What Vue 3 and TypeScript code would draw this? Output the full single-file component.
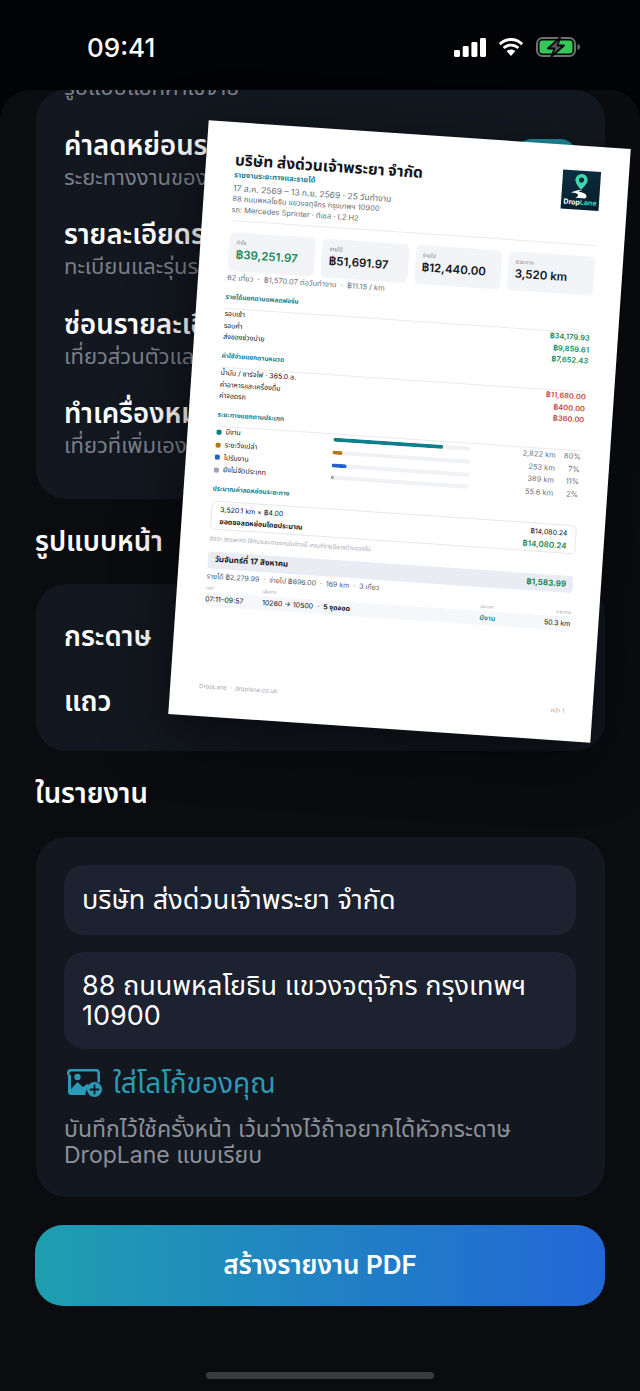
<template>
  <div class="screen">
    <header class="status-bar">
      <span class="clock">09:41</span>
      <div class="status-icons">
        <svg class="signal" viewBox="0 0 32 19" aria-hidden="true">
          <rect x="0" y="12" width="6" height="7" rx="1.4" />
          <rect x="8.7" y="8" width="6" height="11" rx="1.4" />
          <rect x="17.4" y="4" width="6" height="15" rx="1.4" />
          <rect x="26" y="0" width="6" height="19" rx="1.4" />
        </svg>
        <svg class="wifi" viewBox="0 0 28 20" aria-hidden="true">
          <path d="M14 4c4 0 7.500 1.500 10.300 4.200l1.800-2.100C22.800 2.900 18.600 1 14 1S5.200 2.900 1.900 6.100l1.800 2.100C6.500 5.500 10 4 14 4z" />
          <path d="M14 9.600c2.500 0 4.700.9 6.400 2.500l1.900-2.100C20.100 7.900 17.200 6.700 14 6.700s-6.100 1.200-8.300 3.300l1.900 2.100c1.700-1.600 3.900-2.500 6.400-2.500z" />
          <path d="M14 12.400c-1.700 0-3.200.6-4.400 1.700l4.400 5 4.400-5c-1.200-1.100-2.700-1.700-4.400-1.700z" />
        </svg>
        <svg class="battery" viewBox="0 0 45 20" aria-hidden="true">
          <rect x="1" y="1" width="38" height="18" rx="5.500" fill="none" stroke="#6d6f70" stroke-width="2" />
          <rect x="3.500" y="3.500" width="33" height="13" rx="3" fill="#35c759" />
          <path d="M41.500 7v6c1.600-.3 2.500-1.500 2.500-3s-.9-2.700-2.500-3z" fill="#6d6f70" />
          <path d="M24 .5L12 11.500h6.500L15.500 19.500 28 8.500h-6.500z" fill="#55585a" stroke="#05070a" stroke-width="1.800" stroke-linejoin="round" />
        </svg>
      </div>
    </header>

    <main class="sheet">
      <div class="scroll-area">
        <section class="card options-card">
          <div v-for="option in reportOptions" :key="option.detail" class="option-row">
            <div class="option-copy">
              <strong v-if="option.title">{{ option.title }}</strong>
              <span>{{ option.detail }}</span>
            </div>
            <i v-if="option.on" class="toggle" />
          </div>
        </section>

        <h2 class="section-title">รูปแบบหน้า</h2>
        <section class="card page-card">
          <div class="page-row">กระดาษ</div>
          <div class="page-row">แถว</div>
        </section>

        <h2 class="section-title">ในรายงาน</h2>
        <section class="card details-card">
          <div class="field">บริษัท ส่งด่วนเจ้าพระยา จำกัด</div>
          <div class="field">88 ถนนพหลโยธิน แขวงจตุจักร กรุงเทพฯ 10900</div>
          <button type="button" class="logo-button">
            <svg class="logo-icon" viewBox="0 0 36 28" aria-hidden="true">
              <path d="M4 0h25a4 4 0 0 1 4 4v9.600a9.500 9.500 0 0 0-2.600-.4V4.200A1.600 1.600 0 0 0 28.800 2.600H4.200A1.600 1.600 0 0 0 2.600 4.200v1.800H0V4a4 4 0 0 1 4-4z" />
              <path d="M1 6h3v14l6.500-7 5.500 5 4-3 3.400 2.200A9.500 9.500 0 0 0 18.500 26H4a3 3 0 0 1-3-3z" />
              <circle cx="10.500" cy="8" r="3.200" />
              <circle cx="27.500" cy="20.500" r="7.500" />
              <path d="M27.500 16.500v8M23.500 20.500h8" fill="none" stroke="#13171f" stroke-width="1.800" stroke-linecap="round" />
            </svg>
            <span>ใส่โลโก้ของคุณ</span>
          </button>
          <p class="field-hint">บันทึกไว้ใช้ครั้งหน้า เว้นว่างไว้ถ้าอยากได้หัวกระดาษ DropLane แบบเรียบ</p>
        </section>

        <button type="button" class="create-button">สร้างรายงาน PDF</button>
      </div>
      <div class="home-indicator" />
    </main>

    <article class="paper">
      <div class="paper-head">
        <div class="paper-company">
          <h1>บริษัท ส่งด่วนเจ้าพระยา จำกัด</h1>
          <h3>รายงานระยะทางและรายได้</h3>
          <p class="paper-dates">17 ส.ค. 2569 – 13 ก.ย. 2569 · 25 วันทำงาน</p>
          <p>88 ถนนพหลโยธิน แขวงจตุจักร กรุงเทพฯ 10900</p>
          <p>รถ: Mercedes Sprinter · ดีเซล · L2 H2</p>
        </div>
        <div class="paper-logo">
          <svg viewBox="0 0 38 26" aria-hidden="true">
            <path d="M19 .5a6.500 6.500 0 0 0-6.500 6.500c0 4.200 6.500 10 6.500 10s6.500-5.800 6.500-10A6.500 6.500 0 0 0 19 .5z" fill="#3fd8b0" />
            <circle cx="19" cy="7" r="2.700" fill="#0e2a3c" />
            <path d="M21 17c-5 .6-10 2.200-13 4 5-.5 8 .3 8.500 2 .3 1-1 2-2.500 3h10c2-1.500 2-3.500-.5-5-2-1-5-1.500-7-1.500 1.500-1.200 3-2 4.500-2.500z" fill="#fff" />
          </svg>
          <span>Drop<em>Lane</em></span>
        </div>
      </div>

      <div class="kpi-grid">
        <div v-for="kpi in kpis" :key="kpi.label" class="kpi">
          <small>{{ kpi.label }}</small>
          <b :class="{ 'kpi-profit': kpi.profit }">{{ kpi.value }}</b>
        </div>
      </div>
      <p class="paper-stats">62 เที่ยว &nbsp;·&nbsp; ฿1,570.07 ต่อวันทำงาน &nbsp;·&nbsp; ฿11.15 / km</p>

      <h4 class="paper-section">รายได้แยกตามแพลตฟอร์ม</h4>
      <div v-for="row in incomeRows" :key="row.label" class="money-row">
        <span>{{ row.label }}</span><b class="income">{{ row.value }}</b>
      </div>

      <h4 class="paper-section">ค่าใช้จ่ายแยกตามหมวด</h4>
      <div v-for="row in expenseRows" :key="row.label" class="money-row">
        <span>{{ row.label }}</span><b class="expense">{{ row.value }}</b>
      </div>

      <h4 class="paper-section">ระยะทางแยกตามประเภท</h4>
      <div v-for="row in distanceRows" :key="row.label" class="distance-row">
        <i class="dot" :style="{ background: row.color }" />
        <span class="distance-label">{{ row.label }}</span>
        <span class="track"><i :style="{ width: row.share + '%', background: row.color }" /></span>
        <span class="distance-km">{{ row.km }}</span>
        <span class="distance-share">{{ row.share }}%</span>
      </div>

      <h4 class="paper-section deduction-title">ประมาณค่าลดหย่อนระยะทาง</h4>
      <div class="deduction">
        <div class="deduction-line"><span>3,520.1 km × ฿4.00</span><span>฿14,080.24</span></div>
        <div class="deduction-line"><strong>ยอดขอลดหย่อนโดยประมาณ</strong><b class="income">฿14,080.24</b></div>
      </div>
      <p class="deduction-note">อัตรา สรรพากร ใช้กับระยะทางงานในช่วงนี้ เกณฑ์รายปีอาจต่างออกไป</p>

      <div class="day-head">
        <strong>วันจันทร์ที่ 17 สิงหาคม</strong><b class="income">฿1,583.99</b>
      </div>
      <p class="day-stats">รายได้ ฿2,279.99 &nbsp;·&nbsp; จ่ายไป ฿696.00 &nbsp;·&nbsp; 169 km &nbsp;·&nbsp; 3 เที่ยว</p>
      <div class="trip">
        <div class="trip-time"><small>เวลา</small><span>07:11–09:57</span></div>
        <div class="trip-route"><small>เส้นทาง</small><span>10260 → 10500 &nbsp;·&nbsp; <b>5 จุดจอด</b></span></div>
        <div class="trip-type"><small>ประเภท</small><b>มีงาน</b></div>
        <div class="trip-km"><small>ระยะทาง</small><span>50.3 km</span></div>
      </div>

      <footer class="paper-foot">
        <span>DropLane &nbsp;·&nbsp; droplane.co.uk</span>
        <span>หน้า 1</span>
      </footer>
    </article>
  </div>
</template>

<script setup lang="ts">
interface MoneyRow {
  label: string
  value: string
}

const reportOptions = [
  { title: '', detail: 'รูปแบบแยกค่าใช้จ่าย', on: false },
  { title: 'ค่าลดหย่อนระยะทาง', detail: 'ระยะทางงานของช่วงนี้', on: true },
  { title: 'รายละเอียดรถ', detail: 'ทะเบียนและรุ่นรถ', on: false },
  { title: 'ซ่อนรายละเอียด', detail: 'เที่ยวส่วนตัวและอื่นๆ', on: false },
  { title: 'ทำเครื่องหมาย', detail: 'เที่ยวที่เพิ่มเอง', on: false }
]

const kpis = [
  { label: 'กำไร', value: '฿39,251.97', profit: true },
  { label: 'รายได้', value: '฿51,691.97', profit: false },
  { label: 'จ่ายไป', value: '฿12,440.00', profit: false },
  { label: 'ระยะทาง', value: '3,520 km', profit: false }
]

const incomeRows: MoneyRow[] = [
  { label: 'รอบเช้า', value: '฿34,179.93' },
  { label: 'รอบค่ำ', value: '฿9,859.61' },
  { label: 'ส่งของช่วงบ่าย', value: '฿7,652.43' }
]

const expenseRows: MoneyRow[] = [
  { label: 'น้ำมัน / ชาร์จไฟ · 365.0 ล.', value: '฿11,680.00' },
  { label: 'ค่าอาหารและเครื่องดื่ม', value: '฿400.00' },
  { label: 'ค่าจอดรถ', value: '฿360.00' }
]

const distanceRows = [
  { label: 'มีงาน', color: '#0f7f8c', km: '2,822 km', share: 80 },
  { label: 'ระยะวิ่งเปล่า', color: '#b4761a', km: '253 km', share: 7 },
  { label: 'ไปรับงาน', color: '#2460cf', km: '389 km', share: 11 },
  { label: 'ยังไม่จัดประเภท', color: '#a3a3b8', km: '55.6 km', share: 2 }
]
</script>

<style>
html,
body {
  margin: 0;
  background: #020304;
}
</style>

<style scoped>
.screen {
  position: relative;
  width: 640px;
  height: 1391px;
  overflow: hidden;
  background: #020304;
  color: #fff;
  font-family: Inter, "Noto Sans", "Noto Sans Thai", "DejaVu Sans", sans-serif;
}

.status-bar {
  display: flex;
  align-items: center;
  justify-content: space-between;
  height: 90px;
  padding: 4px 59px 0 87px;
  box-sizing: border-box;
}

.clock {
  font-size: 26px;
  font-weight: 500;
}

.status-icons {
  display: flex;
  align-items: center;
  gap: 11px;
}

.signal,
.wifi {
  fill: #fff;
}

.signal {
  width: 32px;
  height: 19px;
}

.wifi {
  width: 28px;
  height: 20px;
}

.battery {
  width: 45px;
  height: 20px;
}

.sheet {
  position: relative;
  height: 1301px;
  overflow: hidden;
  border-radius: 30px 30px 0 0;
  background: #0a0c10;
}

.scroll-area {
  display: flex;
  flex-direction: column;
  padding: 0 35px 0 36px;
}

.card {
  border-radius: 30px;
  background: #13171f;
}

.options-card {
  display: flex;
  flex-direction: column;
  justify-content: flex-end;
  gap: 25.5px;
  height: 409px;
  padding: 0 28px 39px;
  box-sizing: border-box;
}

.option-row {
  display: flex;
  justify-content: space-between;
  height: 64px;
}

.option-copy {
  display: flex;
  flex-direction: column;
}

.option-copy strong {
  font-size: 27.500px;
  font-weight: 600;
  line-height: 34px;
}

.option-copy span {
  color: #7a808a;
  font-size: 22px;
  line-height: 30px;
}

.option-row:first-child {
  height: 30px;
}

.toggle {
  display: block;
  width: 62px;
  height: 34px;
  margin-top: 11px;
  border-radius: 17px;
  background: #1f8d9f;
}

.section-title {
  height: 85px;
  margin: 0 0 0 -1px;
  padding-top: 20px;
  box-sizing: border-box;
  font-size: 27.500px;
  font-weight: 600;
  line-height: 44px;
}

.page-card {
  display: flex;
  flex-direction: column;
  height: 167px;
  padding: 20px 28px;
  box-sizing: border-box;
}

.page-row {
  height: 65px;
  font-size: 27.500px;
  font-weight: 600;
  line-height: 65px;
}

.page-card + .section-title {
  height: 86px;
}

.details-card {
  display: flex;
  flex-direction: column;
  gap: 17px;
  height: 360px;
  padding: 28px 29px 0 28px;
  box-sizing: border-box;
}

.field {
  display: flex;
  align-items: center;
  min-height: 70px;
  padding: 18.500px 18px;
  box-sizing: border-box;
  border-radius: 20px;
  background: #1c2230;
  font-size: 27px;
  line-height: 30px;
}

.logo-button {
  display: flex;
  align-items: center;
  gap: 10px;
  padding: 0 0 0 3px;
  margin-top: 0;
  border: 0;
  background: transparent;
  color: #2a9ab6;
  font-family: inherit;
  font-size: 28px;
  line-height: 34px;
}

.logo-icon {
  width: 36px;
  height: 28px;
  fill: currentColor;
}

.field-hint {
  margin: -1px 0 0;
  color: #8b9099;
  font-size: 23px;
  line-height: 26px;
}

.create-button {
  height: 81px;
  margin-top: 28px;
  margin-left: -1px;
  border: 0;
  border-radius: 28px;
  background: linear-gradient(90deg, #1f9eb0, #2267d6);
  color: #fff;
  font-family: inherit;
  font-size: 26px;
  font-weight: 600;
}

.home-indicator {
  position: absolute;
  bottom: 12px;
  left: 206px;
  width: 228px;
  height: 7px;
  border-radius: 4px;
  background: #3a3b3f;
}

/* the PDF page lying tilted over the options */
.paper {
  position: absolute;
  top: 134px;
  left: 188px;
  display: flex;
  flex-direction: column;
  width: 423px;
  height: 595px;
  padding: 28px 28px 25px 29px;
  box-sizing: border-box;
  background: #fff;
  box-shadow: 0 18px 60px rgb(0 0 0 / 55%);
  color: #14161b;
  transform: rotate(3.9deg);
}

.paper p,
.paper h1,
.paper h3,
.paper h4 {
  margin: 0;
}

.paper-head {
  display: flex;
  justify-content: space-between;
  height: 70px;
  border-bottom: 1px solid #e9ebef;
}

.paper-company h1 {
  font-size: 15.500px;
  font-weight: 700;
  line-height: 20px;
}

.paper-company h3 {
  color: #13808f;
  font-size: 7.500px;
  font-weight: 700;
  line-height: 10px;
}

.paper-company p {
  color: #666b75;
  font-size: 7.500px;
  line-height: 10.500px;
}

.paper .paper-dates {
  margin-top: 2px;
  font-size: 8.500px;
  line-height: 12px;
}

.paper-logo {
  display: flex;
  flex-direction: column;
  align-items: center;
  justify-content: flex-end;
  width: 38px;
  height: 39px;
  margin-top: -3px;
  padding-bottom: 3px;
  box-sizing: border-box;
  background: linear-gradient(160deg, #0b2f44, #0a1c2b);
  color: #fff;
  font-size: 7px;
  font-weight: 700;
  line-height: 8px;
}

.paper-logo svg {
  width: 36px;
  height: 26px;
}

.paper-logo em {
  color: #3fd8b0;
  font-style: normal;
}

.kpi-grid {
  display: grid;
  grid-template-columns: repeat(4, 1fr);
  gap: 7px;
  margin-top: 11px;
}

.kpi {
  display: flex;
  flex-direction: column;
  height: 39px;
  padding: 6px 7px 0;
  box-sizing: border-box;
  border-radius: 5px;
  background: #f3f4f8;
}

.kpi small {
  color: #7b808a;
  font-size: 5.500px;
  line-height: 9px;
}

.kpi b {
  font-size: 11.500px;
  font-weight: 600;
  line-height: 15px;
}

.kpi .kpi-profit,
.income {
  color: #22895a;
}

.expense {
  color: #c4473c;
}

.paper .paper-stats {
  margin-top: 1px;
  color: #6d727c;
  font-size: 7.500px;
  line-height: 12px;
}

.paper .paper-section {
  height: 16px;
  margin: 8px 0 -1px;
  border-bottom: 1px solid #e9ebef;
  color: #13808f;
  font-size: 6.500px;
  font-weight: 700;
  line-height: 10px;
}

.money-row {
  display: flex;
  justify-content: space-between;
  height: 11.700px;
  font-size: 7px;
  line-height: 11.700px;
}

.money-row b {
  font-size: 7.500px;
  font-weight: 600;
}

.distance-row {
  display: flex;
  align-items: center;
  height: 12.600px;
  font-size: 7px;
}

.dot {
  width: 5px;
  height: 5px;
  margin-right: 4px;
  border-radius: 1.500px;
}

.distance-label {
  width: 108px;
}

.track {
  display: block;
  width: 138px;
  height: 4px;
  overflow: hidden;
  border-radius: 2px;
  background: #f0f1f4;
}

.track i {
  display: block;
  height: 100%;
  border-radius: 2px;
}

.distance-km {
  width: 85px;
  color: #6d727c;
  font-size: 7.500px;
  text-align: right;
}

.distance-share {
  width: 25px;
  color: #6d727c;
  font-size: 7.500px;
  text-align: right;
}

.paper .deduction-title {
  margin-top: 7px;
  border-bottom-color: transparent;
}

.deduction {
  height: 29px;
  margin-top: 1px;
  padding: 2px 8px;
  box-sizing: border-box;
  border: 1px solid #e5e7ec;
  border-radius: 5px;
}

.deduction-line {
  display: flex;
  justify-content: space-between;
  align-items: center;
  height: 12.500px;
  font-size: 7px;
}

.deduction-line strong {
  font-weight: 700;
}

.deduction-line b {
  font-size: 8px;
  font-weight: 600;
}

.paper .deduction-note {
  margin-top: 4px;
  color: #a3a7ae;
  font-size: 6px;
  line-height: 10px;
}

.day-head {
  display: flex;
  align-items: center;
  justify-content: space-between;
  height: 17.500px;
  margin-top: 8px;
  padding: 0 7px;
  border-radius: 4px;
  background: #e9ecf2;
  font-size: 8px;
}

.paper .day-stats {
  margin-top: 3px;
  color: #555a64;
  font-size: 7px;
  line-height: 10px;
}

.trip {
  display: grid;
  grid-template-columns: 57px 218px 1fr auto;
  margin-top: 2px;
  border-radius: 3px;
  background: linear-gradient(#fff 9px, #f5f7fa 9px);
  font-size: 7px;
}

.trip > div {
  display: flex;
  flex-direction: column;
}

.trip small {
  color: #9a9ea6;
  font-size: 4.500px;
  line-height: 9px;
}

.trip span,
.trip-type b {
  line-height: 14px;
}

.trip-type b {
  color: #13808f;
  font-weight: 600;
}

.trip-km {
  text-align: right;
}

.paper-foot {
  display: flex;
  justify-content: space-between;
  margin-top: auto;
  color: #a3a7ae;
  font-size: 6px;
}
</style>
